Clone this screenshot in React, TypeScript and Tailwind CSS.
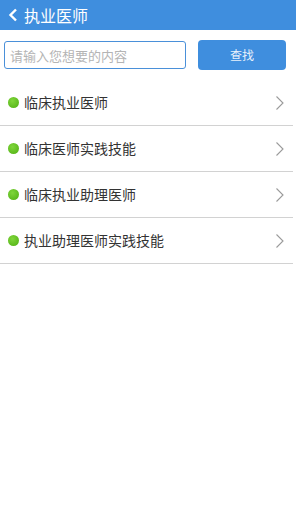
import React from "react";

const items = ["临床执业医师", "临床医师实践技能", "临床执业助理医师", "执业助理医师实践技能"];

const font = { fontFamily: '"Noto Sans CJK SC", "Liberation Sans", sans-serif' };

const App = () => {
  return (
    <div className="w-[296px] h-[528px] bg-white" style={font}>
      <div className="h-[30px] bg-[#3f8ede] flex items-center pl-[8px] gap-[6px] text-white">
        <svg width="10" height="14" viewBox="0 0 10 14">
          <path d="M8 1.5 L2.5 7 L8 12.5" fill="none" stroke="white" strokeWidth="2.4" />
        </svg>
        <span className="text-[16px] leading-none">执业医师</span>
      </div>
      <div className="flex items-center px-[4px] pt-[10px] gap-[12px]">
        <div className="w-[182px] h-[28px] border border-[#4a90d9] rounded-[3px] flex items-center px-[5px]">
          <span className="text-[13px] text-[#b4b4b4] leading-none">请输入您想要的内容</span>
        </div>
        <button className="w-[88px] h-[30px] bg-[#3f8ede] rounded-[4px] text-[#e8f1fb] text-[12px]">查找</button>
      </div>
      <div className="mt-[10px] w-[293px]">
        {items.map((t, i) => (
          <div key={i} className="h-[46px] flex items-center border-b border-[#d2d2d2]">
            <span className="w-[11px] h-[11px] rounded-full bg-[radial-gradient(circle_at_40%_35%,#7fd63a,#4fae12)] ml-[8px] mr-[5px]" />
            <span className="text-[14px] text-[#333] flex-1">{t}</span>
            <svg width="10" height="16" viewBox="0 0 10 16" className="mr-[8px]">
              <path d="M1.5 1.5 L8 8 L1.5 14.5" fill="none" stroke="#9a9a9a" strokeWidth="1.1" />
            </svg>
          </div>
        ))}
      </div>
    </div>
  );
};

export default App;
